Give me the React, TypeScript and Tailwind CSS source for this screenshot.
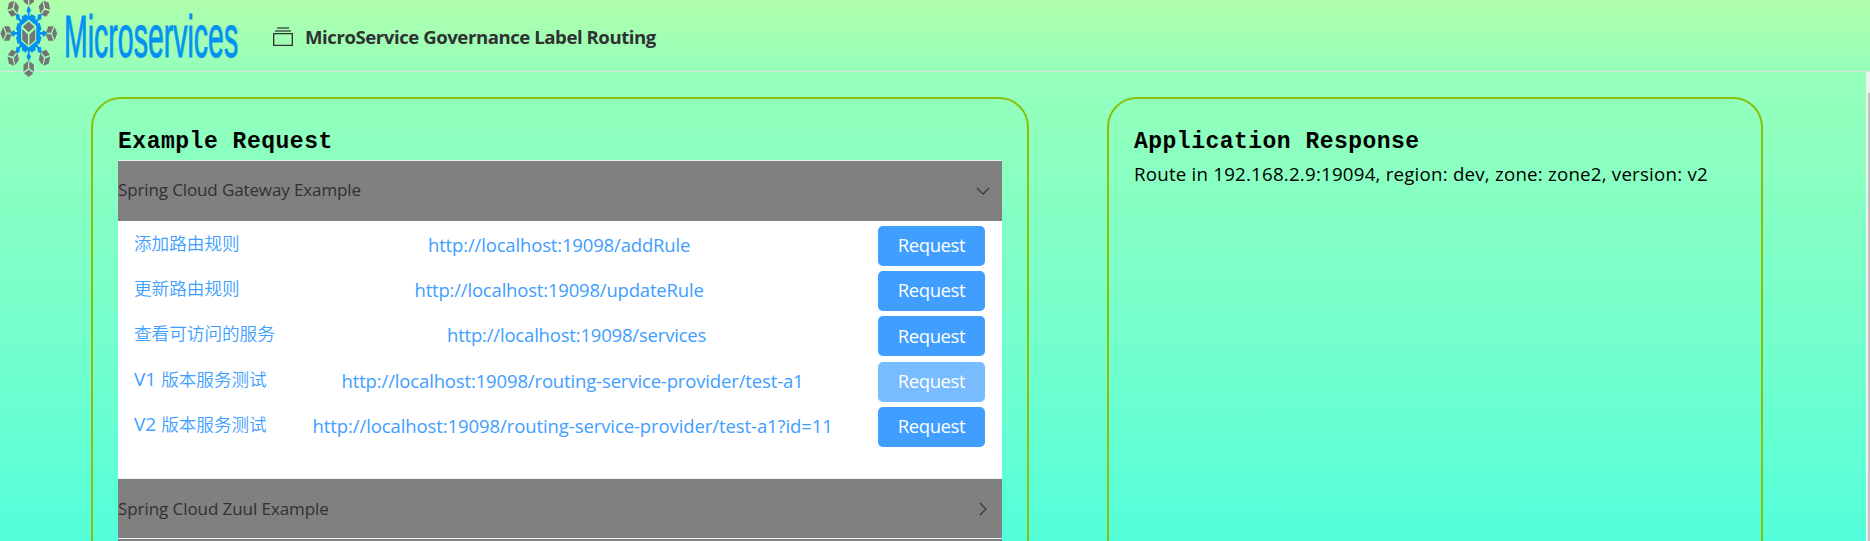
import React from "react";

const GRAY = "#757575";
const BLUE = "#0492f2";

type CubeProps = { x: number; y: number; w?: number; h?: number; angle?: number };

function Cube({ x, y, w = 10.4, h = 16, angle = 0 }: CubeProps) {
  return (
    <g transform={`translate(${x} ${y}) scale(${w / 20} ${h / 22}) rotate(${angle})`}>
      <path fill={GRAY} d="M0-11 9-6 0-1-9-6zM-10-4-1.2 1V11L-10 6zM10-4 1.2 1V11L10 6z" />
    </g>
  );
}

const spokes = [0, 45, 90, 135, 180, 225, 270, 315];
const teeth = [22, 68, 112, 158, 202, 248, 292, 338];

const satellites: CubeProps[] = [
  { x: 28.7, y: -2.7, angle: 0 },
  { x: 28.7, y: 69, angle: 180 },
  { x: 6.2, y: 33.5, angle: 270 },
  { x: 51.5, y: 33.5, angle: 90 },
  { x: 13, y: 8.5, angle: 315 },
  { x: 44.7, y: 8.5, angle: 45 },
  { x: 13, y: 58, angle: 225 },
  { x: 44.7, y: 58, angle: 135 },
];

function Logo() {
  return (
    <svg className="block h-[80px] w-[240px] shrink-0" viewBox="0 0 240 80">
      <g transform="translate(28.7 33.4) scale(0.66 1)" fill={BLUE}>
        {spokes.map((a) => (
          <path key={a} transform={`rotate(${a})`} d="M0-28 3.5-23 1.4-20.5V-13H-1.4V-20.5L-3.5-23z" />
        ))}
        {teeth.map((a) => (
          <path key={a} transform={`rotate(${a})`} d="M-5-14H5L3.4-19.5H-3.4z" />
        ))}
        <circle r="17.5" />
        <path d="M0-14 11.4-7.6V7.6L0 14-11.4 7.6V-7.6z" fill="#a4ffb5" />
      </g>
      <Cube x={28.7} y={33.4} w={13} h={24} />
      {satellites.map((s, i) => (
        <Cube key={i} {...s} />
      ))}
      <text
        transform="translate(64 57) scale(0.475 1)"
        fontSize="60"
        fill={BLUE}
        stroke={BLUE}
        strokeWidth="1"
        fontFamily="'Liberation Sans', sans-serif"
      >
        Microservices
      </text>
    </svg>
  );
}

function StackIcon() {
  return (
    <svg className="block h-5 w-5 shrink-0" viewBox="0 0 20 20" fill="none" stroke="#303133">
      <path strokeOpacity=".8" strokeWidth="1.4" d="M4 1H16M2 4H18" />
      <path strokeWidth="1.3" d="M.7 6.7H19.3V18.3H.7z" />
    </svg>
  );
}

function Chevron({ open }: { open: boolean }) {
  return (
    <svg className="mr-[12px] block h-[14px] w-[14px]" viewBox="0 0 14 14" fill="none" stroke="#303133" strokeWidth="1.1">
      <path d={open ? "M1 4 7 10 13 4" : "M4 1 10 7 4 13"} />
    </svg>
  );
}

type Row = { version?: string; label: string; url: string; active?: boolean; labelClass: string; urlClass: string };

const rows: Row[] = [
  { label: "添加路由规则", url: "http://localhost:19098/addRule", labelClass: "w-[105px]", urlClass: "w-[261px] tracking-[-0.16px]" },
  { label: "更新路由规则", url: "http://localhost:19098/updateRule", labelClass: "w-[105px]", urlClass: "w-[288px] tracking-[-0.19px]" },
  { label: "查看可访问的服务", url: "http://localhost:19098/services", labelClass: "w-[141px]", urlClass: "w-[259px] tracking-[-0.19px]" },
  { version: "V1 ", label: "版本服务测试", url: "http://localhost:19098/routing-service-provider/test-a1", active: true, labelClass: "w-[133px]", urlClass: "w-[462px] tracking-[-0.145px]" },
  { version: "V2 ", label: "版本服务测试", url: "http://localhost:19098/routing-service-provider/test-a1?id=11", labelClass: "w-[133px]", urlClass: "w-[520px] tracking-[-0.09px]" },
];

function PanelHeader({ title, open }: { title: string; open: boolean }) {
  return (
    <div
      className={`${open ? "h-[60px] tracking-[-0.12px]" : "h-[59px] tracking-[-0.07px]"} flex shrink-0 items-center justify-between bg-[#808080] text-[17px] text-[#303133]`}
    >
      <span className={`${open ? "-mt-[2px]" : ""} whitespace-nowrap`}>{title}</span>
      <Chevron open={open} />
    </div>
  );
}

export default function App() {
  return (
    <div className="flex h-[541px] w-full flex-col overflow-hidden bg-[#95ffba] font-['Open_Sans','Noto_Sans_CJK_SC',sans-serif]">
      <header className="relative z-10 flex h-[72px] shrink-0 items-start border-b border-[#dcdfe6] bg-linear-to-b from-[#b0ffab] to-[#95ffba]">
        <Logo />
        <div className="ml-[33px] mt-[27px] flex h-5 items-center gap-[12px]">
          <StackIcon />
          <h1 className="-mt-px whitespace-nowrap text-[18.6px] leading-5 font-bold tracking-[-0.45px] text-[#303133]">
            MicroService Governance Label Routing
          </h1>
        </div>
      </header>

      <main className="flex min-h-0 flex-1 bg-linear-to-b from-[#95ffba] to-[#52ffda]">
        <div className="flex min-w-0 flex-1 gap-[78px] pt-[25px] pl-[91px]">
          <section className="flex h-[600px] w-[938px] flex-col rounded-[30px] border-2 border-[#8ac007] px-[25px] pt-[26px]">
            <h2 className="h-[35px] font-['Liberation_Mono',monospace] text-[23px] leading-[35px] font-bold tracking-[0.52px] text-black">
              Example Request
            </h2>
            <div className="flex flex-col border-t border-[#ebeef5]">
              <PanelHeader title="Spring Cloud Gateway Example" open />
              <div className="flex h-[258px] flex-col gap-[5.2px] border-b border-[#ebeef5] bg-white pt-[5px] pr-[17px] pl-[16px] text-[#409eff]">
                {rows.map((r) => (
                  <div key={r.url} className="flex h-10 shrink-0 items-center justify-between">
                    <span className={`${r.labelClass} -mt-[6px] text-[17.6px] leading-6 font-[350] whitespace-pre`}>
                      {r.version && <span className="text-[19px] font-normal">{r.version}</span>}
                      {r.label}
                    </span>
                    <span className={`${r.urlClass} -mt-[2px] text-[18.5px] leading-6 whitespace-nowrap`}>{r.url}</span>
                    <button
                      className={`${r.active ? "bg-[#79bbff]" : "bg-[#409eff]"} flex h-10 w-[107px] items-center justify-center rounded-[5px] pb-[2px] text-[18.5px] tracking-[-0.4px] text-white`}
                    >
                      Request
                    </button>
                  </div>
                ))}
              </div>
              <PanelHeader title="Spring Cloud Zuul Example" open={false} />
              <div className="border-t border-[#ebeef5]" />
              <PanelHeader title="" open={false} />
            </div>
          </section>

          <section className="flex h-[600px] w-[656px] flex-col rounded-[30px] border-2 border-[#8ac007] px-[25px] pt-[26px]">
            <h2 className="h-[35px] font-['Liberation_Mono',monospace] text-[23px] leading-[35px] font-bold tracking-[0.48px] text-black">
              Application Response
            </h2>
            <p className="text-[18.7px] leading-7 tracking-[0.22px] whitespace-nowrap text-black">
              Route in 192.168.2.9:19094, region: dev, zone: zone2, version: v2
            </p>
          </section>
        </div>
        <div className="flex w-[4px] shrink-0 flex-col bg-[#f1f1f1] pt-[21px] pl-[2px]">
          <div className="flex-1 bg-[#c1c1c1]" />
        </div>
      </main>
    </div>
  );
}
